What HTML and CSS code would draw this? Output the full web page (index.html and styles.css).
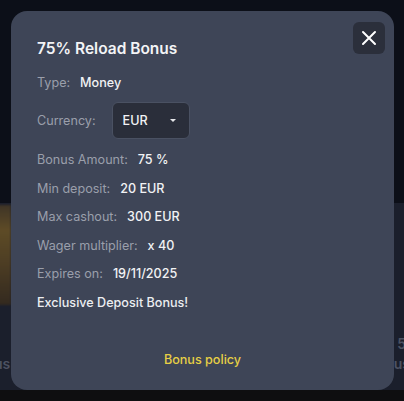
FILE: index.html
```html
<!DOCTYPE html>
<html lang="en">
<head>
<meta charset="utf-8">
<title>75% Reload Bonus</title>
<link rel="stylesheet" href="styles.css">
</head>
<body>
<div class="backdrop">
  <div class="band-top"></div>
  <div class="band-mid">
    <div class="thumb thumb-left"></div>
    <span class="ghost ghost-left">us</span>
    <span class="ghost ghost-right-a">5</span>
    <span class="ghost ghost-right-b">us</span>
  </div>
  <div class="band-bottom"></div>
</div>

<div class="modal">
  <button class="close" aria-label="Close">
    <svg width="16" height="16" viewBox="0 0 16 16"><path d="M2 2 L14 14 M14 2 L2 14" stroke="#ffffff" stroke-width="2" stroke-linecap="round"/></svg>
  </button>
  <h2 class="title">75% Reload Bonus</h2>
  <div class="row row-type"><span class="label">Type:</span><span class="value">Money</span></div>
  <div class="row row-currency">
    <span class="label">Currency:</span>
    <div class="select"><span class="select-text">EUR</span><span class="caret"></span></div>
  </div>
  <div class="list">
    <div class="row"><span class="label">Bonus Amount:</span><span class="value">75 %</span></div>
    <div class="row"><span class="label">Min deposit:</span><span class="value">20 EUR</span></div>
    <div class="row"><span class="label">Max cashout:</span><span class="value">300 EUR</span></div>
    <div class="row"><span class="label">Wager multiplier:</span><span class="value">x 40</span></div>
    <div class="row"><span class="label">Expires on:</span><span class="value">19/11/2025</span></div>
    <div class="row"><span class="desc">Exclusive Deposit Bonus!</span></div>
  </div>
  <a class="policy" href="#">Bonus policy</a>
</div>
</body>
</html>
```

FILE: styles.css
```css
* { box-sizing: border-box; }
html, body { margin: 0; padding: 0; }
body {
  width: 404px;
  height: 401px;
  overflow: hidden;
  font-family: Inter, "Noto Sans", sans-serif;
  background: #0c0f17;
  position: relative;
}
.backdrop {
  display: flex;
  flex-direction: column;
  height: 401px;
}
.band-top { height: 203px; background: #0c0f18; }
.band-mid {
  height: 187px;
  background: #1b1f2c;
  position: relative;
  overflow: hidden;
}
.band-bottom { height: 11px; background: #0e0e10; }
.thumb-left {
  position: absolute;
  left: -20px;
  top: 2px;
  width: 31px;
  height: 100px;
  background: linear-gradient(180deg, #3e3426 0%, #5e4b26 25%, #4f3f24 55%, #33291f 100%);
  filter: blur(1px);
}
.ghost {
  position: absolute;
  color: #4d5262;
  font-size: 14px;
  font-weight: 600;
}
.ghost-left { left: -6px; top: 152px; }
.ghost-right-a { right: -2px; top: 132px; }
.ghost-right-b { right: -6px; top: 152px; }

.modal {
  position: absolute;
  left: 11px;
  top: 11px;
  width: 383px;
  height: 379px;
  background: #3e4557;
  border-radius: 16px;
  padding: 28px 26px 20px 26px;
  display: flex;
  flex-direction: column;
}
.close {
  position: absolute;
  top: 11px;
  right: 9px;
  width: 32px;
  height: 32px;
  border: none;
  border-radius: 6px;
  background: #2b2f3b;
  display: flex;
  align-items: center;
  justify-content: center;
  padding: 0;
}
.title {
  margin: 0;
  font-size: 15.5px;
  line-height: 20px;
  font-weight: 600;
  color: #f3f4f6;
}
.row {
  display: flex;
  align-items: center;
  gap: 10px;
  height: 20px;
  font-size: 12.6px;
  line-height: 20px;
}
.label { color: #9a9fab; }
.value { color: #f1f2f4; font-weight: 500; }
.desc { color: #eceef1; font-weight: 500; }
.row-type { margin-top: 14px; }
.row-currency { margin-top: 9px; height: 37px; gap: 16px; }
.select {
  width: 78px;
  height: 37px;
  background: #2a2e3a;
  border: 1px solid #4a5162;
  border-radius: 6px;
  display: flex;
  align-items: center;
  justify-content: space-between;
  padding: 0 13px 0 10px;
}
.select-text { color: #f1f2f4; font-weight: 500; font-size: 12.6px; }
.caret {
  width: 0;
  height: 0;
  border-left: 3px solid transparent;
  border-right: 3px solid transparent;
  border-top: 3px solid #e6e7ea;
}
.list {
  margin-top: 11px;
  display: flex;
  flex-direction: column;
  gap: 8.5px;
}
.policy {
  margin-top: auto;
  align-self: center;
  color: #e7cf45;
  font-size: 12.6px;
  line-height: 20px;
  font-weight: 500;
  text-decoration: none;
}
```
